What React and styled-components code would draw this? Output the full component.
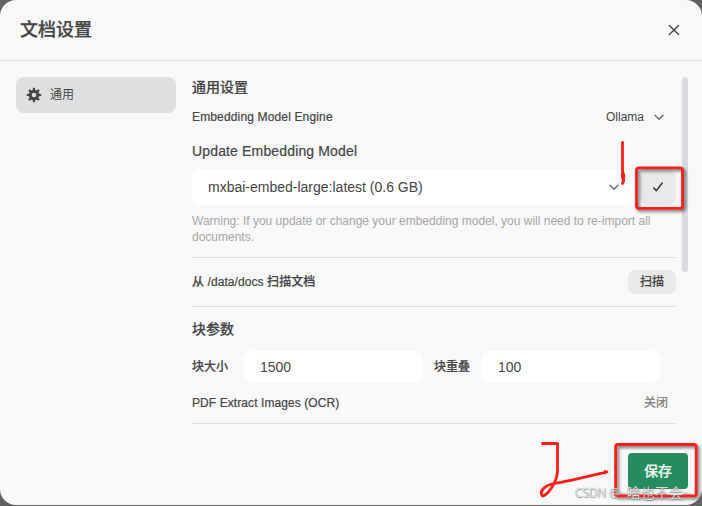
import React from 'react';
import styled, { createGlobalStyle } from 'styled-components';

const GlobalStyle = createGlobalStyle`
  * { box-sizing: border-box; }
  body {
    margin: 0;
    background: #626262;
    color: #454545;
    font: 12px/16px "Liberation Sans", "Noto Sans CJK SC", sans-serif;
    overflow: hidden;
  }
  button, input { font: inherit; color: inherit; border: 0; margin: 0; }
`;

const Dialog = styled.div`
  position: relative;
  display: flex;
  flex-direction: column;
  width: 702px;
  height: 505px;
  background: #f8f8f8;
  border-radius: 16px;
`;

const Header = styled.header`
  display: flex;
  align-items: center;
  justify-content: space-between;
  height: 61px;
  padding: 0 20px;
  border-bottom: 1px solid #dcdcdc;
`;

const Title = styled.h1`
  margin: 0;
  font-size: 18px;
  line-height: 28px;
  font-weight: 500;
  -webkit-text-stroke: 0.25px currentColor;
`;

const CloseButton = styled.button`
  display: flex;
  width: 16px;
  height: 16px;
  padding: 0;
  background: none;
`;

const Body = styled.div`
  display: flex;
  flex: 1;
  gap: 16px;
  padding: 16px 14px 0 16px;
`;

const Sidebar = styled.nav`
  width: 160px;
`;

const Tab = styled.button`
  display: flex;
  align-items: center;
  gap: 8px;
  width: 160px;
  height: 36px;
  padding: 0 10px;
  background: #dfdfdf;
  border-radius: 8px;
`;

const Content = styled.main`
  width: 484px;
`;

const Label = styled.span`
  font-size: ${(p) => (p.$large ? 14 : 12)}px;
  line-height: 20px;
  font-weight: 500;
  letter-spacing: ${(p) => p.$spacing || 0}px;
  -webkit-text-stroke: 0.2px currentColor;
`;

const Row = styled.div`
  display: flex;
  align-items: center;
  justify-content: space-between;
  height: ${(p) => p.$height}px;
  padding-right: ${(p) => p.$inset || 0}px;
`;

const EngineValue = styled.div`
  display: flex;
  align-items: center;
  gap: 10px;
`;

const ModelRow = styled.div`
  display: flex;
  gap: 8px;
  margin-top: 4px;
`;

const ModelSelect = styled.div`
  display: flex;
  align-items: center;
  justify-content: space-between;
  width: 440px;
  height: 36px;
  padding: 0 12px 0 16px;
  background: #fff;
  border-radius: 8px;
  font-size: 14px;
`;

const ConfirmButton = styled.button`
  display: flex;
  align-items: center;
  justify-content: center;
  width: 36px;
  height: 36px;
  padding: 0;
  background: #e8e8e8;
  border-radius: 8px;
`;

const Warning = styled.p`
  margin: 8px 0 12px;
  color: #a6a6a6;
`;

const Divider = styled.hr`
  height: 1px;
  margin: 0;
  border: 0;
  background: #dcdcdc;
`;

const ScanButton = styled.button`
  width: 48px;
  height: 24px;
  padding: 0;
  background: #e8e8e8;
  border-radius: 8px;
  font-weight: 500;
  -webkit-text-stroke: 0.15px currentColor;
`;

const ChunkFields = styled.div`
  display: flex;
  gap: 12px;
`;

const Field = styled.label`
  display: flex;
  align-items: center;
  gap: ${(p) => p.$gap}px;
`;

const NumberInput = styled.input`
  width: 178px;
  height: 32px;
  padding: 0 16px;
  background: #fff;
  border-radius: 8px;
  font-size: 14px;
`;

const Toggle = styled.span`
  color: #858585;
  font-weight: 500;
  -webkit-text-stroke: 0.1px currentColor;
`;

const ScrollThumb = styled.div`
  width: 6px;
  height: 195px;
  margin-left: -10px;
  background: #dadae3;
  border-radius: 3px;
`;

const Footer = styled.footer`
  display: flex;
  justify-content: flex-end;
  padding: 0 14px 16px;
`;

const SaveButton = styled.button`
  width: 60px;
  height: 36px;
  padding: 0;
  background: #278d60;
  border-radius: 4px;
  color: #f0f5f2;
  font-size: 14px;
  font-weight: 500;
  -webkit-text-stroke: 0.2px currentColor;
`;

const Annotations = styled.svg`
  position: absolute;
  inset: 0;
  pointer-events: none;
`;

const Watermark = styled.div`
  position: absolute;
  left: 575px;
  top: 484px;
  display: flex;
  white-space: pre;
  color: #fffffff0;
  font: 300 12px/17px "Open Sans", "Noto Sans CJK SC", sans-serif;
  text-shadow: 0 0 1px #666, 0.5px 0.5px 1px #777;
`;

const WatermarkName = styled.span`
  font-size: 14px;
  margin-left: -1px;
`;

const Gear = () => (
  <svg width="16" height="16" viewBox="-8 -8 16 16">
    <circle r="3.75" fill="none" stroke="#454545" strokeWidth="2.9" />
    {[0, 45, 90, 135, 180, 225, 270, 315].map((angle) => (
      <path key={angle} d="M-1.35-4.5-1-7.2H1L1.35-4.5Z" fill="#454545" transform={`rotate(${angle})`} />
    ))}
  </svg>
);

const Chevron = ({ width = 10 }) => (
  <svg width={width} height="7" viewBox="0 0 10 7">
    <path d="M1 1.3 5 5.3 9 1.3" fill="none" stroke="#63677a" strokeWidth="1.3" strokeLinecap="round" strokeLinejoin="round" />
  </svg>
);

export default function App() {
  return (
    <>
      <GlobalStyle />
      <Dialog>
        <Header>
          <Title>文档设置</Title>
          <CloseButton aria-label="Close">
            <svg width="16" height="16">
              <path d="M3.4 3.4 12.6 12.6M12.6 3.4 3.4 12.6" stroke="#454545" strokeWidth="1.4" strokeLinecap="round" />
            </svg>
          </CloseButton>
        </Header>
        <Body>
          <Sidebar>
            <Tab><Gear />通用</Tab>
          </Sidebar>
          <Content>
            <Row $height={20}><Label $large>通用设置</Label></Row>
            <Row $height={40} $inset={12}>
              <Label $spacing={0.15}>Embedding Model Engine</Label>
              <EngineValue>Ollama <Chevron /></EngineValue>
            </Row>
            <Row $height={28}><Label $large $spacing={0.15}>Update Embedding Model</Label></Row>
            <ModelRow>
              <ModelSelect>mxbai-embed-large:latest (0.6 GB)<Chevron width={12} /></ModelSelect>
              <ConfirmButton aria-label="Update">
                <svg width="12" height="12">
                  <path d="M1.8 6.9 4.4 9.7 10.2 2" fill="none" stroke="#292929" strokeWidth="1.4" strokeLinecap="round" strokeLinejoin="round" />
                </svg>
              </ConfirmButton>
            </ModelRow>
            <Warning>Warning: If you update or change your embedding model, you will need to re-import all documents.</Warning>
            <Divider />
            <Row $height={48}>
              <Label $spacing={0.08}>从 /data/docs 扫描文档</Label>
              <ScanButton>扫描</ScanButton>
            </Row>
            <Divider />
            <Row $height={44}><Label $large>块参数</Label></Row>
            <ChunkFields>
              <Field $gap={16}><Label>块大小</Label><NumberInput defaultValue="1500" /></Field>
              <Field $gap={12}><Label>块重叠</Label><NumberInput defaultValue="100" /></Field>
            </ChunkFields>
            <Row $height={40} $inset={8}>
              <Label $spacing={0.08}>PDF Extract Images (OCR)</Label>
              <Toggle>关闭</Toggle>
            </Row>
            <Divider />
          </Content>
          <ScrollThumb />
        </Body>
        <Footer><SaveButton>保存</SaveButton></Footer>
        <Annotations width="702" height="505" fill="none" stroke="#ff1c16" strokeWidth="2.8" strokeLinecap="round" strokeLinejoin="round">
          <g filter="drop-shadow(2px 2px 1.5px #0008)">
            <rect x="636.5" y="167.8" width="46" height="40.6" rx="2.5" />
            <rect x="615.6" y="444.5" width="80.6" height="51.4" rx="2.5" />
          </g>
          <path d="M622.5 142.5V171Q625 178 622.5 183.5M622.8 171Q621.5 177 623.8 181" />
          <path d="M542.5 443.5H557.5V471C557 482 548 495 542.5 496C539 492 544 486 552 484C570 481 586 477 607 472M605 471.5V473" />
        </Annotations>
        <Watermark>CSDN @<WatermarkName>~啥也不会~</WatermarkName></Watermark>
      </Dialog>
    </>
  );
}
